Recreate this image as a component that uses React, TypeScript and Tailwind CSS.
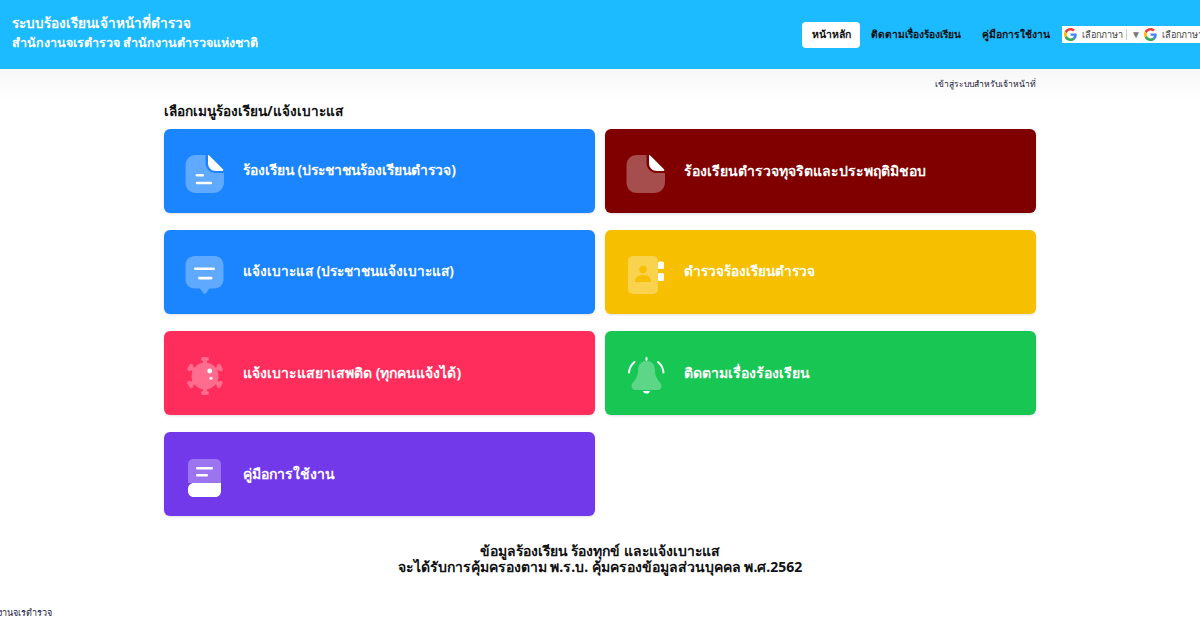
import type { ReactNode } from 'react';

const font = '[font-family:"Noto_Sans","Liberation_Sans",sans-serif]';

function GoogleG() {
  return (
    <svg viewBox="0 0 48 48" className="w-[13px] h-[13px] shrink-0">
      <path fill="#EA4335" d="M24 9.5c3.5 0 6.700 1.200 9.200 3.600l6.900-6.900C35.900 2.400 30.500 0 24 0 14.600 0 6.500 5.400 2.600 13.200l8 6.200C12.500 13.700 17.800 9.500 24 9.500z" />
      <path fill="#4285F4" d="M46.900 24.500c0-1.600-.1-3.100-.4-4.500H24v9h12.900c-.6 3-2.200 5.500-4.800 7.200l7.700 6c4.500-4.200 7.100-10.300 7.100-17.700z" />
      <path fill="#FBBC05" d="M10.500 28.600c-.5-1.400-.8-3-.8-4.600s.3-3.200.8-4.600l-8-6.200C.9 16.500 0 20.100 0 24s.9 7.500 2.600 10.800l7.900-6.200z" />
      <path fill="#34A853" d="M24 48c6.500 0 11.900-2.100 15.900-5.800l-7.700-6c-2.200 1.500-4.900 2.300-8.200 2.300-6.200 0-11.500-4.200-13.400-9.900l-8 6.200C6.500 42.600 14.600 48 24 48z" />
    </svg>
  );
}

function DocIcon({ lines = true }: { lines?: boolean }) {
  return (
    <svg viewBox="0 0 40 40" className="w-10 h-10">
      <path fill="#fff" fillOpacity="0.3" d="M11 1h9.500v7.500c0 6 4.500 10.500 10.500 10.500h8V28c0 6.500-4.500 11-11 11H11C4.500 39 0.500 34.500 0.500 28V12C0.500 5.500 4.500 1 11 1z" />
      <path fill="#fff" d="M23 1c0.500 0 1 0.200 1.500 0.700L38 15.300c0.700 0.800 0.400 1.700-0.700 1.700H31c-4.700 0-8-3.300-8-8z" />
      {lines && <rect x="10.700" y="20" width="8.300" height="2.600" rx="1.300" fill="#fff" />}
      {lines && <rect x="10.700" y="27.700" width="16.500" height="2.600" rx="1.300" fill="#fff" />}
    </svg>
  );
}

function ChatIcon() {
  return (
    <svg viewBox="0 0 40 40" className="w-10 h-10">
      <path fill="#fff" fillOpacity="0.3" d="M10 1h19c5.700 0 9.500 3.800 9.500 9.500V24c0 5.700-3.800 9.500-9.500 9.500h-4.500l-3.700 5c-.6.700-1.500.7-2.100 0l-3.700-5H10C4.300 33.500.5 29.700.5 24V10.500C.5 4.800 4.300 1 10 1z" />
      <rect x="9" y="12.500" width="21" height="2.600" rx="1.300" fill="#fff" />
      <rect x="13" y="21.800" width="14.500" height="2.600" rx="1.300" fill="#fff" />
    </svg>
  );
}

function VirusIcon() {
  const spikes = [0, 60, 120, 180, 240, 300];
  return (
    <svg viewBox="0 0 40 40" className="w-10 h-10">
      <g fill="#fff" opacity="0.3">
        <circle cx="20" cy="20" r="13.500" />
        {spikes.map((a) => (
          <g key={a} transform={`rotate(${a} 20 20)`}>
            <rect x="18" y="2" width="4" height="6" />
            <rect x="16" y="1" width="8" height="4" rx="2" />
          </g>
        ))}
      </g>
      <circle cx="24.700" cy="15" r="2.400" fill="#fff" />
      <circle cx="26" cy="22.300" r="1.500" fill="#fff" />
    </svg>
  );
}

function BookIcon() {
  return (
    <svg viewBox="0 0 40 40" className="w-10 h-10">
      <path fill="#fff" fillOpacity="0.3" d="M8.500 2h22c3.300 0 5.500 2.200 5.500 5.500V26H3V7.500C3 4.200 5.200 2 8.500 2z" />
      <path fill="#fff" d="M9 26h27v8c0 3.500-2.300 6-5.500 6h-22C5.300 40 3 37.500 3 34v-2c0-3.500 2.500-6 6-6z" />
      <rect x="11" y="10" width="17" height="2.500" rx="1.250" fill="#fff" />
      <rect x="11" y="17" width="12" height="2.500" rx="1.250" fill="#fff" />
    </svg>
  );
}

function ContactIcon() {
  return (
    <svg viewBox="0 0 40 40" className="w-10 h-10">
      <rect x="2" y="1" width="30" height="38" rx="5" fill="#fff" fillOpacity="0.3" />
      <rect x="32" y="6.500" width="6" height="7.500" rx="1.500" fill="#fff" />
      <rect x="32" y="18" width="6" height="8" rx="1.500" fill="#fff" />
      <circle cx="17" cy="14.500" r="3.700" fill="#f6c000" />
      <path fill="#f6c000" d="M9 26c0-4 3.500-6 8-6s8 2 8 6c0 .6-.4 1-1 1H10c-.6 0-1-.4-1-1z" />
    </svg>
  );
}

function BellIcon() {
  return (
    <svg viewBox="0 0 40 40" className="w-10 h-10">
      <path fill="#fff" fillOpacity="0.3" d="M20.500 5c5.500 0 8.500 4 8.500 9.500 0 6 2.500 9 6 13.500 1 1.700.3 6-3 6H9c-3.300 0-4-4.300-3-6 3.500-4.500 6-7.500 6-13.500C12 9 15 5 20.500 5z" />
      <rect x="19.500" y="1" width="2" height="4" rx="1" fill="#fff" />
      <path fill="none" stroke="#fff" strokeWidth="2" strokeLinecap="round" d="M8.500 6C5 9 3.200 12.500 3 16.500" />
      <path fill="none" stroke="#fff" strokeWidth="2" strokeLinecap="round" d="M32 6c3.500 3 5.300 6.500 5.500 10.500" />
      <path fill="#fff" d="M17 35h7c-.6 2-1.900 2.600-3.500 2.600S17.600 37 17 35z" />
    </svg>
  );
}

function MenuCard({ icon, label, className, size = 'text-[14px]' }: { icon: ReactNode; label: string; className: string; size?: string }) {
  return (
    <a className={`flex items-center h-[84px] rounded-md pl-[21px] gap-[18px] shadow-sm ${className}`}>
      <span className="shrink-0 w-10 h-10 mt-[5px]">{icon}</span>
      <span className={`text-white font-bold -mt-[1px] ${size}`}>{label}</span>
    </a>
  );
}

export default function App() {
  return (
    <div className={`h-[630px] w-[1200px] overflow-hidden bg-white text-[#111] ${font}`}>
      <header className="h-[69px] bg-[#1cbaff] flex items-center justify-between pl-[12px]">
        <div className="text-white font-bold -mt-[3px]">
          <div className="text-[13.6px] leading-[20px]">ระบบร้องเรียนเจ้าหน้าที่ตำรวจ</div>
          <div className="text-[12.5px] leading-[20px]">สำนักงานจเรตำรวจ สำนักงานตำรวจแห่งชาติ</div>
        </div>
        <nav className="flex items-center text-[10.4px] font-bold text-[#111] shrink-0">
          <a className="bg-white rounded-[4px] h-[26px] w-[58px] flex items-center justify-center">หน้าหลัก</a>
          <a className="ml-[11px] text-[10.2px]">ติดตามเรื่องร้องเรียน</a>
          <a className="ml-[21px] text-[10.3px]">คู่มือการใช้งาน</a>
          <div className="ml-[12px] w-[138px] h-[17px] bg-white flex items-center pl-[2px] overflow-hidden font-normal text-[9px] text-[#444]">
            <GoogleG />
            <span className="ml-[5px] whitespace-nowrap shrink-0">เลือกภาษา</span>
            <span className="ml-[3px] w-px h-[11px] bg-[#ccc] shrink-0" />
            <span className="ml-[4px] text-[10px] text-[#777] shrink-0">▼</span>
            <span className="ml-[3px] shrink-0"><GoogleG /></span>
            <span className="ml-[5px] whitespace-nowrap shrink-0">เลือกภาษา</span>
          </div>
        </nav>
      </header>

      <div className="h-[32px] bg-gradient-to-b from-[#f7f7f7] to-white flex justify-end items-start pt-[8px] pr-[164px]">
        <a className="text-[8.55px] leading-[15px] font-medium text-[#1a1a3a]">เข้าสู่ระบบสำหรับเจ้าหน้าที่</a>
      </div>

      <main className="w-[872px] ml-[164px]">
        <h2 className="text-[13.6px] font-bold leading-[20px] text-[#111]">เลือกเมนูร้องเรียน/แจ้งเบาะแส</h2>
        <div className="grid grid-cols-2 gap-x-[10px] gap-y-[17px] mt-[8px]">
          <MenuCard className="bg-[#1b84ff]" size="text-[13.9px]" icon={<DocIcon />} label="ร้องเรียน (ประชาชนร้องเรียนตำรวจ)" />
          <MenuCard className="bg-[#800000]" icon={<DocIcon lines={false} />} label="ร้องเรียนตำรวจทุจริตและประพฤติมิชอบ" />
          <MenuCard className="bg-[#1b84ff]" size="text-[13.6px]" icon={<ChatIcon />} label="แจ้งเบาะแส (ประชาชนแจ้งเบาะแส)" />
          <MenuCard className="bg-[#f6c000]" size="text-[13.65px]" icon={<ContactIcon />} label="ตำรวจร้องเรียนตำรวจ" />
          <MenuCard className="bg-[#ff2d5c]" icon={<VirusIcon />} label="แจ้งเบาะแสยาเสพติด (ทุกคนแจ้งได้)" />
          <MenuCard className="bg-[#17c653]" icon={<BellIcon />} label="ติดตามเรื่องร้องเรียน" />
          <MenuCard className="bg-[#7239ea]" icon={<BookIcon />} label="คู่มือการใช้งาน" />
        </div>
        <div className="mt-[27px] text-center text-[14px] leading-[16px] font-bold text-[#111]">
          <p className="text-[13.95px]">ข้อมูลร้องเรียน ร้องทุกข์ และแจ้งเบาะแส</p>
          <p>จะได้รับการคุ้มครองตาม พ.ร.บ. คุ้มครองข้อมูลส่วนบุคคล พ.ศ.2562</p>
        </div>
      </main>

      <div className="mt-[31px] -ml-[23px] text-[9px] leading-[14px] text-[#1a1a3a] font-medium whitespace-nowrap">สำนักงานจเรตำรวจ</div>
    </div>
  );
}
